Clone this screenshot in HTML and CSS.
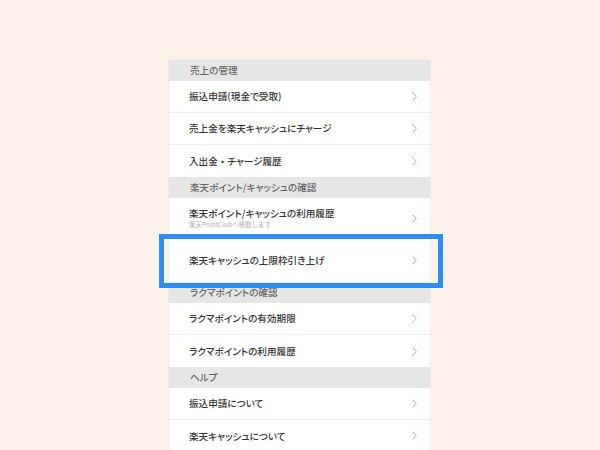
FILE: index.html
```html
<!DOCTYPE html>
<html lang="ja">
<head>
<meta charset="utf-8">
<link rel="stylesheet" href="styles.css">
</head>
<body>
<div class="panel">
  <div class="sec">売上の管理</div>
  <div class="row"><span class="label">振込申請(現金で受取)</span><svg class="chev" viewBox="0 0 5 9"><path d="M0.6 0.6 L4.2 4.5 L0.6 8.4"/></svg></div>
  <div class="row"><span class="label">売上金を楽天キャッシュにチャージ</span><svg class="chev" viewBox="0 0 5 9"><path d="M0.6 0.6 L4.2 4.5 L0.6 8.4"/></svg></div>
  <div class="row last"><span class="label"><span>入出金<span class="wide">・</span>チャージ履歴</span></span><svg class="chev" viewBox="0 0 5 9"><path d="M0.6 0.6 L4.2 4.5 L0.6 8.4"/></svg></div>
  <div class="sec">楽天ポイント/キャッシュの確認</div>
  <div class="row tall"><span class="label"><span class="title">楽天ポイント/キャッシュの利用履歴</span><span class="sub">楽天PointClubへ移動します</span></span><svg class="chev" viewBox="0 0 5 9"><path d="M0.6 0.6 L4.2 4.5 L0.6 8.4"/></svg></div>
  <div class="row hl last"><span class="label">楽天キャッシュの上限枠引き上げ</span><svg class="chev" viewBox="0 0 5 9"><path d="M0.6 0.6 L4.2 4.5 L0.6 8.4"/></svg><div class="box"></div></div>
  <div class="sec">ラクマポイントの確認</div>
  <div class="row"><span class="label">ラクマポイントの有効期限</span><svg class="chev" viewBox="0 0 5 9"><path d="M0.6 0.6 L4.2 4.5 L0.6 8.4"/></svg></div>
  <div class="row last"><span class="label">ラクマポイントの利用履歴</span><svg class="chev" viewBox="0 0 5 9"><path d="M0.6 0.6 L4.2 4.5 L0.6 8.4"/></svg></div>
  <div class="sec">ヘルプ</div>
  <div class="row"><span class="label">振込申請について</span><svg class="chev" viewBox="0 0 5 9"><path d="M0.6 0.6 L4.2 4.5 L0.6 8.4"/></svg></div>
  <div class="row"><span class="label">楽天キャッシュについて</span><svg class="chev" viewBox="0 0 5 9"><path d="M0.6 0.6 L4.2 4.5 L0.6 8.4"/></svg></div>
</div>
</body>
</html>
```
FILE: styles.css
```css
html, body {
  margin: 0;
  padding: 0;
  height: 450px;
  overflow: hidden;
  background: #fdf1ea;
  font-family: "Noto Sans CJK JP", "Noto Sans", sans-serif;
}
.panel {
  width: 261px;
  margin: 60px 0 0 169px;
  background: #fff;
  box-shadow: 0 0 1px rgba(0,0,0,0.18);
  display: flex;
  flex-direction: column;
}
.sec {
  height: 20.5px;
  flex: none;
  background: #e6e6e6;
  color: #666;
  font-size: 9.6px;
  font-weight: 500;
  line-height: 20.5px;
  padding-left: 21px;
  font-feature-settings: "palt";
}
.row {
  position: relative;
  flex: none;
  height: 32.25px;
  display: flex;
  align-items: center;
  justify-content: space-between;
  padding: 0 13px 0 20px;
  border-bottom: 1px solid #eeeeee;
  box-sizing: border-box;
}
.row.last { border-bottom: none; }
.row.tall { height: 40.5px; padding-top: 1px; }
.row.hl { height: 44px; }
.label {
  display: flex;
  flex-direction: column;
  color: #333;
  font-size: 9.6px;
  font-weight: 500;
  line-height: 12px;
  font-feature-settings: "palt";
}
.wide {
  font-feature-settings: normal;
}
.title {
  line-height: 11px;
}
.sub {
  margin-top: 1px;
  color: #b0b0b0;
  font-size: 6.5px;
  font-weight: 400;
  line-height: 8px;
  font-feature-settings: normal;
}
.chev {
  width: 5px;
  height: 9px;
  fill: none;
  stroke: #ababab;
  stroke-width: 1;
}
.box {
  position: absolute;
  left: -10px;
  top: -4.25px;
  right: -13px;
  bottom: -5.75px;
  border: 5px solid #2d8df5;
  pointer-events: none;
}
```
